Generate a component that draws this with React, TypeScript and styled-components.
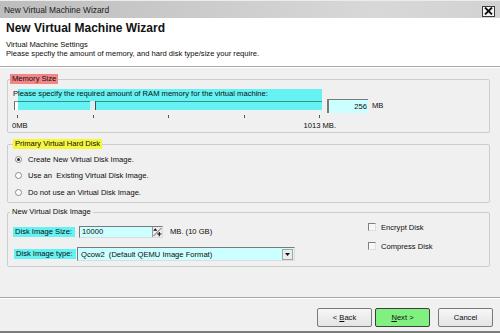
import React from 'react';
import styled, { createGlobalStyle } from 'styled-components';

const GlobalStyle = createGlobalStyle`
  html, body {
    margin: 0;
    padding: 0;
    background: #ffffff;
  }
  body {
    font-family: "Liberation Sans", Arial, sans-serif;
  }
  * {
    box-sizing: border-box;
  }
`;

const CYAN = '#66f2f2';
const PALE_CYAN = '#ccffff';

const Window = styled.div`
  background: #f0f0f0;
  border-bottom: 2px solid #7c7c7c;
  color: #0c0c0c;
  display: flex;
  flex-direction: column;
  font-size: 7.6px;
  height: 333px;
  overflow: hidden;
  width: 500px;
`;

const TitleBar = styled.div`
  align-items: center;
  background: linear-gradient(to right, #bdbdbd, #d8d8d8 75%, #d2d2d2);
  border-top: 1px solid #ececec;
  color: #202020;
  display: flex;
  flex: none;
  font-size: 8.4px;
  height: 18px;
  justify-content: space-between;
  padding: 0 5px 0 4px;
`;

const CloseButton = styled.div`
  align-items: center;
  background: #f6f6f6;
  border: 1px solid #3c3c3c;
  display: flex;
  height: 11px;
  justify-content: center;
  margin-top: 3px;
  width: 13px;
`;

const Header = styled.div`
  background: #ffffff;
  flex: none;
  height: 48px;
  padding: 4px 6px 0;
`;

const HeaderTitle = styled.div`
  color: #111111;
  font-size: 12px;
  font-weight: bold;
  line-height: 13px;
`;

const HeaderLine = styled.div<{ $gap?: number }>`
  line-height: 9px;
  margin-top: ${(p) => p.$gap ?? 0}px;
`;

const HeaderRule = styled.div`
  border-bottom: 1px solid #ffffff;
  border-top: 1px solid #a9a9a9;
  flex: none;
  height: 2px;
`;

const Body = styled.div`
  display: flex;
  flex: 1;
  flex-direction: column;
  padding: 0 10px 0 7px;
`;

const Group = styled.fieldset<{ $top: number; $height: number }>`
  border: 1px solid #cdcdcd;
  border-radius: 2px;
  height: ${(p) => p.$height}px;
  margin: ${(p) => p.$top}px 0 0;
  min-width: 0;
  padding: 0;
`;

const Legend = styled.legend<{ $mark?: string; $indent: number }>`
  background: ${(p) => p.$mark ?? 'transparent'};
  height: 10px;
  line-height: 10px;
  margin-left: ${(p) => p.$indent}px;
  padding: 0 2px;
`;

const GroupBody = styled.div<{ $pt: number; $pl: number }>`
  display: flex;
  padding: ${(p) => p.$pt}px 0 0 ${(p) => p.$pl}px;
`;

const SliderColumn = styled.div`
  display: flex;
  flex-direction: column;
  width: 309px;
`;

const SliderLabel = styled.div`
  background: linear-gradient(to right, transparent 5px, ${CYAN} 5px);
  height: 12px;
  line-height: 9px;
  white-space: nowrap;
`;

const Track = styled.div`
  display: flex;
  height: 9px;
  margin-left: 1px;
`;

const TrackStart = styled.div`
  background: #ffffff;
  border-left: 1px solid #6c6c6c;
  border-top: 1px solid #8c8c8c;
  width: 4px;
`;

const TrackFill = styled.div<{ $width?: number }>`
  background: ${CYAN};
  border-top: 1px solid #3a8e8e;
  flex: ${(p) => (p.$width ? 'none' : '1')};
  width: ${(p) => (p.$width ? `${p.$width}px` : 'auto')};
`;

const Thumb = styled.div`
  background: #dceeee;
  border-right: 1px solid #4c4c4c;
  width: 6px;
`;

const Ticks = styled.div`
  display: flex;
  height: 3px;
  justify-content: space-between;
  margin-top: 5px;
  padding: 0 2px 0 4px;
`;

const Tick = styled.div`
  background: #555555;
  width: 1px;
`;

const Scale = styled.div`
  display: flex;
  justify-content: space-between;
  line-height: 10px;
  margin: 3px 0 0 -1px;
  width: 324px;
`;

const MemoryInput = styled.div`
  background: ${PALE_CYAN};
  border-left: 2px solid #7a7a7a;
  border-top: 1px solid #7a7a7a;
  height: 14px;
  line-height: 13px;
  margin: 10px 0 0 5px;
  padding-right: 1px;
  text-align: right;
  width: 41px;
`;

const Unit = styled.span<{ $gap: number; $top?: number }>`
  line-height: 14px;
  margin-left: ${(p) => p.$gap}px;
  margin-top: ${(p) => p.$top ?? 0}px;
  white-space: nowrap;
`;

const RadioList = styled.div`
  display: flex;
  flex-direction: column;
`;

const RadioRow = styled.label`
  align-items: center;
  display: flex;
  gap: 6px;
  height: 16.5px;
`;

const Radio = styled.span<{ $checked?: boolean }>`
  background: #ffffff;
  border: 1px solid #8a8a8a;
  border-radius: 50%;
  display: inline-block;
  height: 7px;
  position: relative;
  width: 7px;
  &::after {
    background: #2a2a2a;
    border-radius: 50%;
    content: '';
    display: ${(p) => (p.$checked ? 'block' : 'none')};
    height: 3px;
    left: 1px;
    position: absolute;
    top: 1px;
    width: 3px;
  }
`;

const FieldsColumn = styled.div`
  display: flex;
  flex-direction: column;
  padding-top: 9px;
  width: 282px;
`;

const FieldRow = styled.div<{ $top?: number; $height: number }>`
  align-items: center;
  display: flex;
  height: ${(p) => p.$height}px;
  margin-top: ${(p) => p.$top ?? 0}px;
`;

const FieldLabel = styled.span<{ $indent?: number }>`
  background: ${CYAN};
  height: 10px;
  line-height: 10px;
  margin-left: ${(p) => p.$indent ?? 0}px;
  padding-left: 2px;
  white-space: nowrap;
  width: 62px;
`;

const SpinInput = styled.div`
  background: ${PALE_CYAN};
  border: 1px solid;
  border-color: #7a7a7a #dcdcdc #dcdcdc #7a7a7a;
  display: flex;
  height: 12px;
  justify-content: space-between;
  line-height: 10px;
  margin-left: 4px;
  padding-left: 2px;
  width: 84px;
`;

const SpinButton = styled.span`
  background: #ececec;
  border-left: 1px solid #9a9a9a;
  display: flex;
  height: 10px;
  width: 10px;
`;

const Combo = styled.div`
  align-items: center;
  background: ${PALE_CYAN};
  border: 1px solid;
  border-color: #7a7a7a #dcdcdc #dcdcdc #7a7a7a;
  display: flex;
  height: 14px;
  justify-content: space-between;
  margin-left: 1px;
  padding: 0 1px 0 3px;
  width: 218px;
`;

const DropButton = styled.span`
  align-items: center;
  background: #ececec;
  border: 1px solid #a4a4a4;
  display: flex;
  height: 11px;
  justify-content: center;
  width: 11px;
`;

const CheckColumn = styled.div`
  display: flex;
  flex-direction: column;
  gap: 5px;
  margin-left: 73px;
  padding-top: 3px;
`;

const CheckRow = styled.label`
  align-items: center;
  display: flex;
  gap: 5px;
  height: 14px;
`;

const CheckBox = styled.span`
  background: #f8f8f8;
  border: 1px solid;
  border-color: #808080 #dedede #dedede #808080;
  display: inline-block;
  height: 8px;
  width: 8px;
`;

const Footer = styled.div`
  align-items: flex-start;
  border-top: 1px solid #a8a8a8;
  box-shadow: inset 0 1px 0 #ffffff;
  display: flex;
  flex: none;
  height: 34px;
  justify-content: flex-end;
  padding: 10px 7px 0 0;
`;

const Button = styled.div<{ $primary?: boolean; $gap?: number }>`
  align-items: center;
  background: ${(p) =>
    p.$primary ? '#80f080' : 'linear-gradient(#f6f6f6, #e4e4e4)'};
  border: 1px solid ${(p) => (p.$primary ? '#3e3e3e' : '#7a7a7a')};
  border-radius: 2px;
  display: flex;
  height: 19px;
  justify-content: center;
  margin-left: ${(p) => p.$gap ?? 0}px;
  width: 55px;
`;

const App = () => {
  return (
    <>
      <GlobalStyle />
      <Window>
        <TitleBar>
          <span>New Virtual Machine Wizard</span>
          <CloseButton>
            <svg width="9" height="8" viewBox="0 0 9 8">
              <path d="M1 0.5 L8 7.5 M8 0.5 L1 7.5" stroke="#111" strokeWidth="1.8" />
            </svg>
          </CloseButton>
        </TitleBar>
        <Header>
          <HeaderTitle>New Virtual Machine Wizard</HeaderTitle>
          <HeaderLine $gap={5}>Virtual Machine Settings</HeaderLine>
          <HeaderLine>
            Please specfiy the amount of memory, and hard disk type/size your require.
          </HeaderLine>
        </Header>
        <HeaderRule />
        <Body>
          <Group $top={6} $height={59}>
            <Legend $indent={2} $mark="#f28686">Memory Size</Legend>
            <GroupBody $pt={5} $pl={5}>
              <SliderColumn>
                <SliderLabel>
                  Please specify the required amount of RAM memory for the virtual machine:
                </SliderLabel>
                <Track>
                  <TrackStart />
                  <TrackFill $width={72} />
                  <Thumb />
                  <TrackFill />
                </Track>
                <Ticks>
                  {[0, 1, 2, 3, 4].map((i) => (
                    <Tick key={i} />
                  ))}
                </Ticks>
                <Scale>
                  <span>0MB</span>
                  <span>1013 MB.</span>
                </Scale>
              </SliderColumn>
              <MemoryInput>256</MemoryInput>
              <Unit $gap={4} $top={10}>MB</Unit>
            </GroupBody>
          </Group>

          <Group $top={6} $height={64}>
            <Legend $indent={5} $mark="#f6f63c">Primary Virtual Hard Disk</Legend>
            <GroupBody $pt={2} $pl={7}>
              <RadioList>
                <RadioRow>
                  <Radio $checked />
                  Create New Virtual Disk Image.
                </RadioRow>
                <RadioRow>
                  <Radio />
                  Use an&nbsp; Existing Virtual Disk Image.
                </RadioRow>
                <RadioRow>
                  <Radio />
                  Do not use an Virtual Disk Image.
                </RadioRow>
              </RadioList>
            </GroupBody>
          </Group>

          <Group $top={4} $height={60}>
            <Legend $indent={2}>New Virtual Disk Image</Legend>
            <GroupBody $pt={0} $pl={5}>
              <FieldsColumn>
                <FieldRow $height={12}>
                  <FieldLabel>Disk Image Size:</FieldLabel>
                  <SpinInput>
                    <span>10000</span>
                    <SpinButton>
                      <svg width="10" height="10" viewBox="0 0 10 10">
                        <path d="M0.5 9.5 L9.5 0.5" stroke="#333" strokeWidth="0.8" />
                        <path d="M2.5 0.8 L4.8 3.6 L0.2 3.6 Z" fill="#111" />
                        <path d="M4.6 7.3 H9.4 M7 5 V9.6" stroke="#111" strokeWidth="1.2" />
                      </svg>
                    </SpinButton>
                  </SpinInput>
                  <Unit $gap={7}>MB. (10 GB)</Unit>
                </FieldRow>
                <FieldRow $top={9} $height={14}>
                  <FieldLabel $indent={1}>Disk Image type:</FieldLabel>
                  <Combo>
                    <span>Qcow2&nbsp; (Default QEMU Image Format)</span>
                    <DropButton>
                      <svg width="5" height="3" viewBox="0 0 5 3">
                        <path d="M0 0 H5 L2.5 3 Z" fill="#111" />
                      </svg>
                    </DropButton>
                  </Combo>
                </FieldRow>
              </FieldsColumn>
              <CheckColumn>
                <CheckRow>
                  <CheckBox />
                  Encrypt Disk
                </CheckRow>
                <CheckRow>
                  <CheckBox />
                  Compress Disk
                </CheckRow>
              </CheckColumn>
            </GroupBody>
          </Group>
        </Body>
        <Footer>
          <Button>
            &lt;&nbsp;<u>B</u>ack
          </Button>
          <Button $primary $gap={3}>
            <u>N</u>ext&nbsp;&gt;
          </Button>
          <Button $gap={8}>Cancel</Button>
        </Footer>
      </Window>
    </>
  );
};

export default App;
